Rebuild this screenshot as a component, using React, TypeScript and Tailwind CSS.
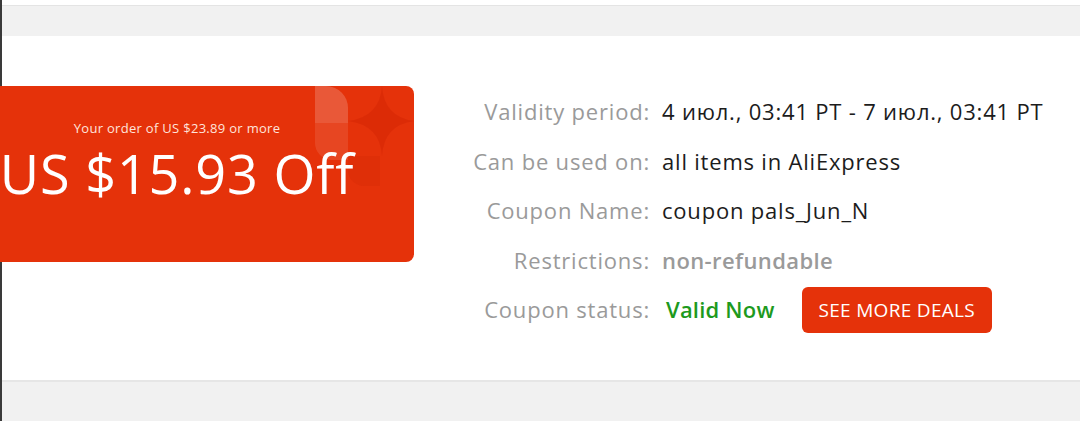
const rows: { label: string; value: string; tone: 'dark' | 'muted' }[] = [
  { label: 'Validity period:', value: '4 июл., 03:41 PT - 7 июл., 03:41 PT', tone: 'dark' },
  { label: 'Can be used on:', value: 'all items in AliExpress', tone: 'dark' },
  { label: 'Coupon Name:', value: 'coupon pals_Jun_N', tone: 'dark' },
  { label: 'Restrictions:', value: 'non-refundable', tone: 'muted' },
];

function CouponDecor() {
  return (
    <svg
      className="absolute right-0 top-0"
      width="100"
      height="100"
      viewBox="0 0 100 100"
      aria-hidden="true"
    >
      {/* petal */}
      <path d="M1 0 H12 A22 22 0 0 1 34 22 V74 H18 A17 17 0 0 1 1 57 Z" fill="#ffffff" fillOpacity="0.1" />
      <path d="M1 0 H12 A22 22 0 0 1 34 22 V37 H1 Z" fill="#ffffff" fillOpacity="0.1" />
      {/* star */}
      <path
        d="M68 0 Q70 31 100 35 Q70 39 68 70 Q66 39 34 35 Q66 31 68 0 Z"
        fill="#c81f00"
        fillOpacity="0.3"
      />
      <path d="M34 70 H66 V100 H50 A16 16 0 0 1 34 84 Z" fill="#c81f00" fillOpacity="0.18" />
    </svg>
  );
}

export default function App() {
  return (
    <div className="w-full h-[421px] overflow-hidden bg-white font-['Open_Sans',sans-serif]">
      <div className="h-full border-l-2 border-[#3a3a3a] flex flex-col">
        <div className="h-[5px] bg-white" />
        <div className="h-[31px] bg-[#f1f1f1] border-t border-[#e4e4e4]" />

        <section className="h-[346px] bg-white border-b-2 border-[#e6e6e6] flex items-start">
          <div className="relative -ml-[62px] mt-[50px] w-[474px] h-[176px] rounded-[8px] bg-[#e5320a] overflow-hidden flex flex-col items-center text-white">
            <CouponDecor />
            <p className="relative mt-[33px] text-[13px] leading-[18px] tracking-[0.3px] text-[#ffe4dc]">
              Your order of US $23.89 or more
            </p>
            <p className="relative mt-[6px] text-[54px] leading-[60px] tracking-[0.8px]">US $15.93 Off</p>
          </div>

          <div className="ml-[46px] mt-[51px] grid grid-cols-[190px_auto] gap-x-[12px] text-[22px] tracking-[0.8px]">
            {rows.map((r) => (
              <div key={r.label} className="contents">
                <div className="h-[49.5px] flex items-center justify-end text-[#9a9a9a]">{r.label}</div>
                <div
                  className={
                    r.tone === 'dark'
                      ? 'h-[49.5px] flex items-center text-[#1c1c1c]'
                      : 'h-[49.5px] flex items-center text-[#9a9a9a] font-semibold tracking-[0.4px]'
                  }
                >
                  {r.value}
                </div>
              </div>
            ))}
            <div className="h-[49.5px] flex items-center justify-end text-[#9a9a9a]">Coupon status:</div>
            <div className="h-[49.5px] flex items-center gap-[27px] pl-[4px]">
              <span className="text-[#1d9a1d] font-semibold tracking-[0.2px]">Valid Now</span>
              <button className="h-[46px] px-[17px] rounded-[6px] bg-[#e5320a] text-white text-[19px] tracking-[0.3px] uppercase">
                See more deals
              </button>
            </div>
          </div>
        </section>

        <div className="flex-1 bg-[#f1f1f1]" />
      </div>
    </div>
  );
}
